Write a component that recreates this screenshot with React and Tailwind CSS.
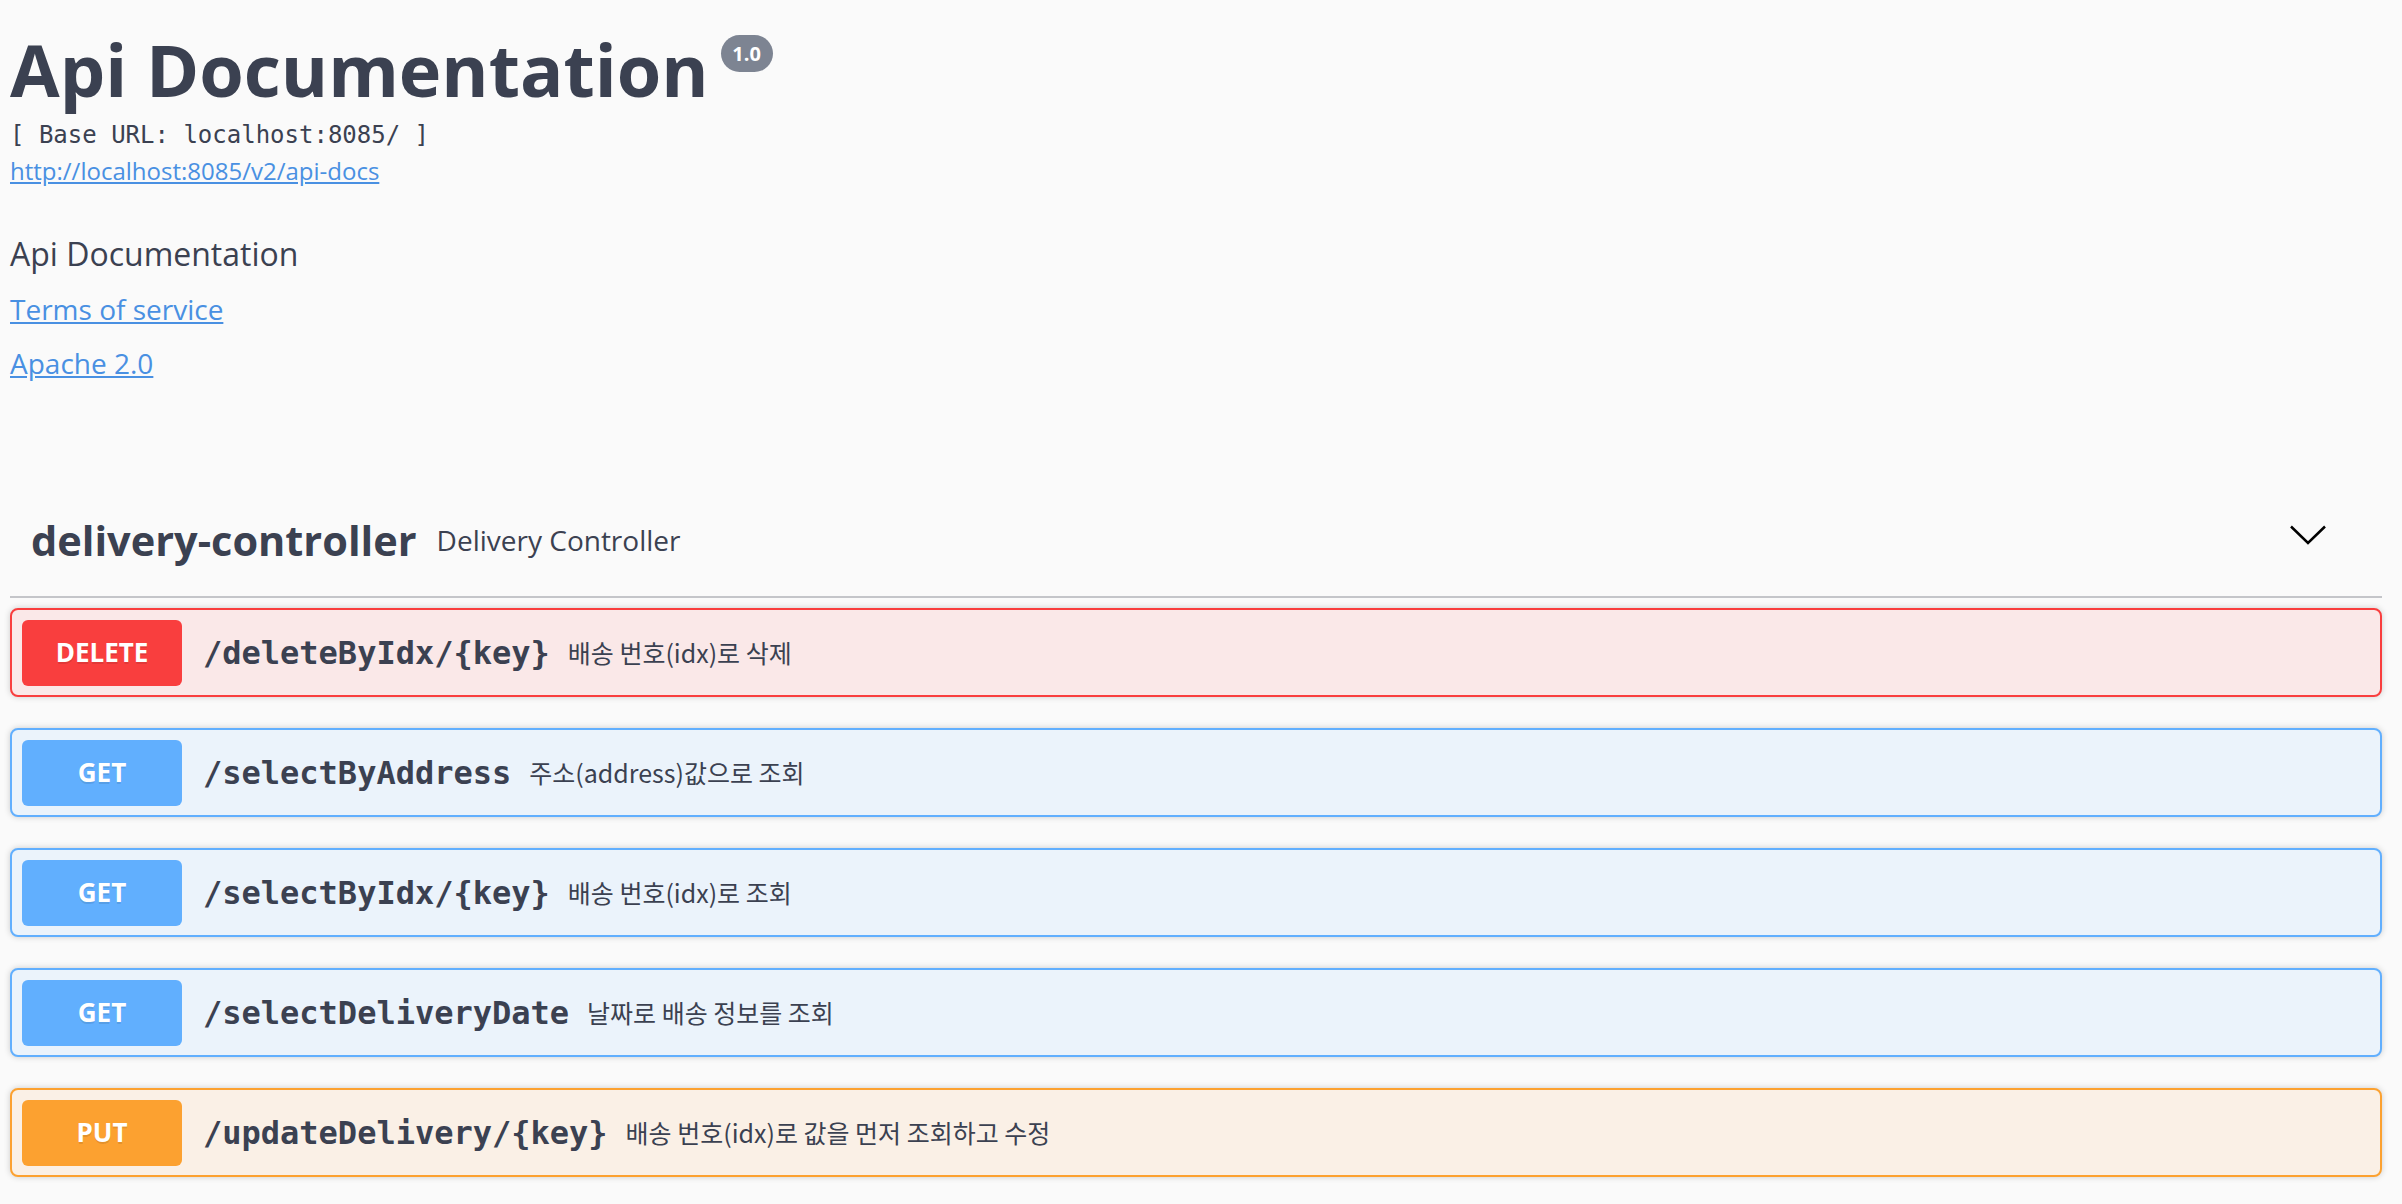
const ops = [
  {
    method: "DELETE",
    path: "/deleteByIdx/{key}",
    desc: "배송 번호(idx)로 삭제",
    box: "border-[#f93e3e] bg-[#fae8e8]",
    badge: "bg-[#f93e3e]",
  },
  {
    method: "GET",
    path: "/selectByAddress",
    desc: "주소(address)값으로 조회",
    box: "border-[#61affe] bg-[#ebf3fb]",
    badge: "bg-[#61affe]",
  },
  {
    method: "GET",
    path: "/selectByIdx/{key}",
    desc: "배송 번호(idx)로 조회",
    box: "border-[#61affe] bg-[#ebf3fb]",
    badge: "bg-[#61affe]",
  },
  {
    method: "GET",
    path: "/selectDeliveryDate",
    desc: "날짜로 배송 정보를 조회",
    box: "border-[#61affe] bg-[#ebf3fb]",
    badge: "bg-[#61affe]",
  },
  {
    method: "PUT",
    path: "/updateDelivery/{key}",
    desc: "배송 번호(idx)로 값을 먼저 조회하고 수정",
    box: "border-[#fca130] bg-[#faf0e6]",
    badge: "bg-[#fca130]",
  },
];

const OpBlock = ({ op }) => (
  <div
    className={`flex items-center h-[89px] border-2 rounded-[8px] px-[10px] mb-[31px] shadow-[0_0_6px_rgba(0,0,0,0.19)] ${op.box}`}
  >
    <div
      className={`w-[160px] h-[66px] shrink-0 rounded-[6px] flex items-center justify-center text-white font-bold text-[26px] [text-shadow:0_2px_0_rgba(0,0,0,0.1)] ${op.badge}`}
    >
      {op.method}
    </div>
    <span className="ml-[21px] font-['DejaVu_Sans_Mono',monospace] font-bold text-[32px] text-[#3b4151]">
      {op.path}
    </span>
    <span className="ml-[18px] font-['Noto_Sans_CJK_KR',sans-serif] text-[25px] text-[#3b4151]">
      {op.desc}
    </span>
  </div>
);

export default function App() {
  return (
    <div className="min-h-screen bg-[#fafafa] pl-[10px] pr-[20px] pt-[33px] font-['Open_Sans','Noto_Sans_CJK_KR',sans-serif] text-[#3b4151]">
      {/* info */}
      <div className="flex items-start">
        <h2 className="text-[72px] leading-[72px] font-bold">Api Documentation</h2>
        <span className="ml-[12px] mt-[2px] w-[52px] h-[37px] rounded-full bg-[#7d8492] text-white font-bold text-[20px] flex items-center justify-center">
          1.0
        </span>
      </div>
      <pre className="mt-[15px] leading-[30px] text-[24px] font-['DejaVu_Sans_Mono',monospace] text-[#3b4151]">
        [ Base URL: localhost:8085/ ]
      </pre>
      <div className="mt-[5px] leading-[32px] text-[24px]">
        <a href="#" className="text-[#4990e2] underline">
          http://localhost:8085/v2/api-docs
        </a>
      </div>
      <p className="mt-[46px] leading-[42px] text-[32px]">Api Documentation</p>
      <div className="mt-[16px] leading-[36px] text-[28px]">
        <a href="#" className="text-[#4990e2] underline">
          Terms of service
        </a>
      </div>
      <div className="mt-[18px] leading-[36px] text-[28px]">
        <a href="#" className="text-[#4990e2] underline">
          Apache 2.0
        </a>
      </div>

      {/* tag section */}
      <div className="mt-[109px] flex items-center pt-[20px] pb-[26px] pl-[21px] pr-[56px] border-b-2 border-[#c4c5c9]">
        <h3 className="text-[41.5px] leading-[60px] font-bold">delivery-controller</h3>
        <span className="ml-[20px] text-[28px]">Delivery Controller</span>
        <svg
          className="ml-auto mb-[10px]"
          width="36"
          height="20"
          viewBox="0 0 36 20"
          fill="none"
          stroke="#000"
          strokeWidth="2.5"
        >
          <path d="M1 1.5 L18 18 L35 1.5" />
        </svg>
      </div>

      <div className="mt-[10px]">
        {ops.map((op) => (
          <OpBlock key={op.path} op={op} />
        ))}
      </div>
    </div>
  );
}
